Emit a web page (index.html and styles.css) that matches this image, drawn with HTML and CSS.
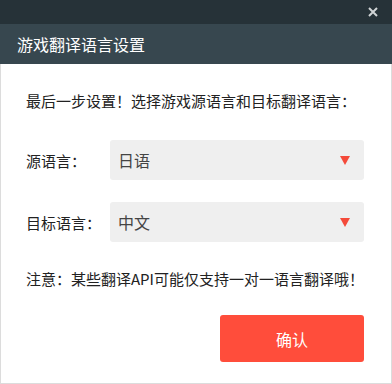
FILE: index.html
```html
<!DOCTYPE html>
<html lang="zh-CN">
<head>
  <meta charset="UTF-8">
  <title>游戏翻译语言设置</title>
  <link rel="stylesheet" href="styles.css">
</head>
<body>
  <div class="window">
    <div class="titlebar">
      <span class="close">
        <svg width="10" height="10" viewBox="0 0 10 10"><path d="M1 1L9 9M9 1L1 9" stroke="#d0d4d6" stroke-width="2"/></svg>
      </span>
    </div>
    <div class="header">游戏翻译语言设置</div>
    <div class="content">
      <p class="intro">最后一步设置！选择游戏源语言和目标翻译语言：</p>
      <div class="form-row">
        <label>源语言：</label>
        <div class="select">
          <span>日语</span>
          <i class="arrow"></i>
        </div>
      </div>
      <div class="form-row">
        <label>目标语言：</label>
        <div class="select">
          <span>中文</span>
          <i class="arrow"></i>
        </div>
      </div>
      <p class="note">注意：某些翻译API可能仅支持一对一语言翻译哦！</p>
      <div class="actions">
        <button>确认</button>
      </div>
    </div>
  </div>
</body>
</html>
```

FILE: styles.css
```css
body {
  margin: 0;
  font-family: "Noto Sans CJK SC", "Noto Sans", sans-serif;
  background: #fff;
}
.window {
  width: 392px;
  height: 384px;
  display: flex;
  flex-direction: column;
}
.titlebar {
  height: 24px;
  background-color: #263238;
  display: flex;
  justify-content: flex-end;
  align-items: center;
  padding-right: 14px;
}
.close {
  display: flex;
}
.header {
  height: 40px;
  background-color: #37474f;
  color: #fff;
  font-size: 16px;
  line-height: 40px;
  padding-left: 17px;
}
.content {
  flex: 1;
  border: 1px solid #dcdcdc;
  border-top: none;
  padding: 0 27px 0 25px;
}
.intro {
  margin: 27px 0 0;
  font-size: 15px;
  line-height: 20px;
  color: #222;
}
.form-row {
  display: flex;
  align-items: center;
  margin-top: 22px;
}
.intro + .form-row {
  margin-top: 29px;
}
label {
  width: 84px;
  font-size: 15px;
  color: #222;
}
.select {
  flex: 1;
  height: 40px;
  background-color: #efefef;
  border-radius: 3px;
  display: flex;
  align-items: center;
  justify-content: space-between;
  padding: 0 14px 0 8px;
  font-size: 16px;
  color: #444;
}
.arrow {
  width: 0;
  height: 0;
  border-left: 5px solid transparent;
  border-right: 5px solid transparent;
  border-top: 9px solid #f44a3a;
}
.note {
  margin: 27px 0 0;
  font-size: 15px;
  line-height: 20px;
  color: #222;
}
.actions {
  display: flex;
  justify-content: flex-end;
  margin-top: 26px;
}
button {
  width: 144px;
  height: 47px;
  background-color: #ff4d3b;
  color: #fff;
  border: none;
  border-radius: 3px;
  font-family: inherit;
  font-size: 16px;
}
```
